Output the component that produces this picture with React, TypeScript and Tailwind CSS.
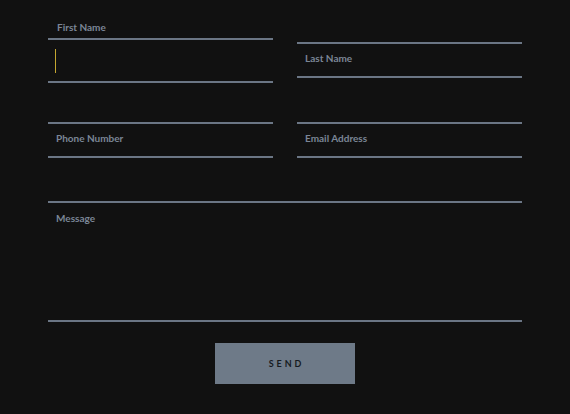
import React from "react";

const font = { fontFamily: "Lato, 'Open Sans', sans-serif" };

function Field({ label, className = "" }: { label: string; className?: string }) {
  return (
    <div className={`h-[36px] border-y-2 border-[#6b7685] flex items-center px-2 pb-[5px] ${className}`}>
      <span className="block text-[10px] font-bold text-[#7b8696] leading-none">{label}</span>
    </div>
  );
}

export default function App() {
  return (
    <div className="min-h-[414px] w-full bg-[#111111] px-[48px] pt-[42px]" style={font}>
      <div className="grid grid-cols-2 gap-x-[24px] gap-y-[44px] w-[474px]">
        {/* focused field with floating label */}
        <div className="relative h-[36px]">
          <span className="absolute left-[9px] -top-[20px] text-[10px] font-bold text-[#7b8696] leading-none">
            First Name
          </span>
          <div className="absolute inset-x-0 -top-[4px] h-[45px] border-y-2 border-[#6b7685] flex items-center pl-[7px]">
            <span className="block w-px h-[24px] bg-[#c4a630]" />
          </div>
        </div>
        <Field label="Last Name" />
        <Field label="Phone Number" />
        <Field label="Email Address" />
      </div>
      <div className="mt-[43px] w-[474px] h-[121px] border-y-2 border-[#6b7685] px-2 pt-[10px]">
        <span className="block text-[10px] font-bold text-[#7b8696] leading-none">Message</span>
      </div>
      <div className="flex justify-center pt-[21px]">
        <button className="w-[140px] h-[41px] bg-[#6e7a88] text-[9px] font-bold tracking-[0.32em] text-[#161b22] pl-[3px]">
          SEND
        </button>
      </div>
    </div>
  );
}
